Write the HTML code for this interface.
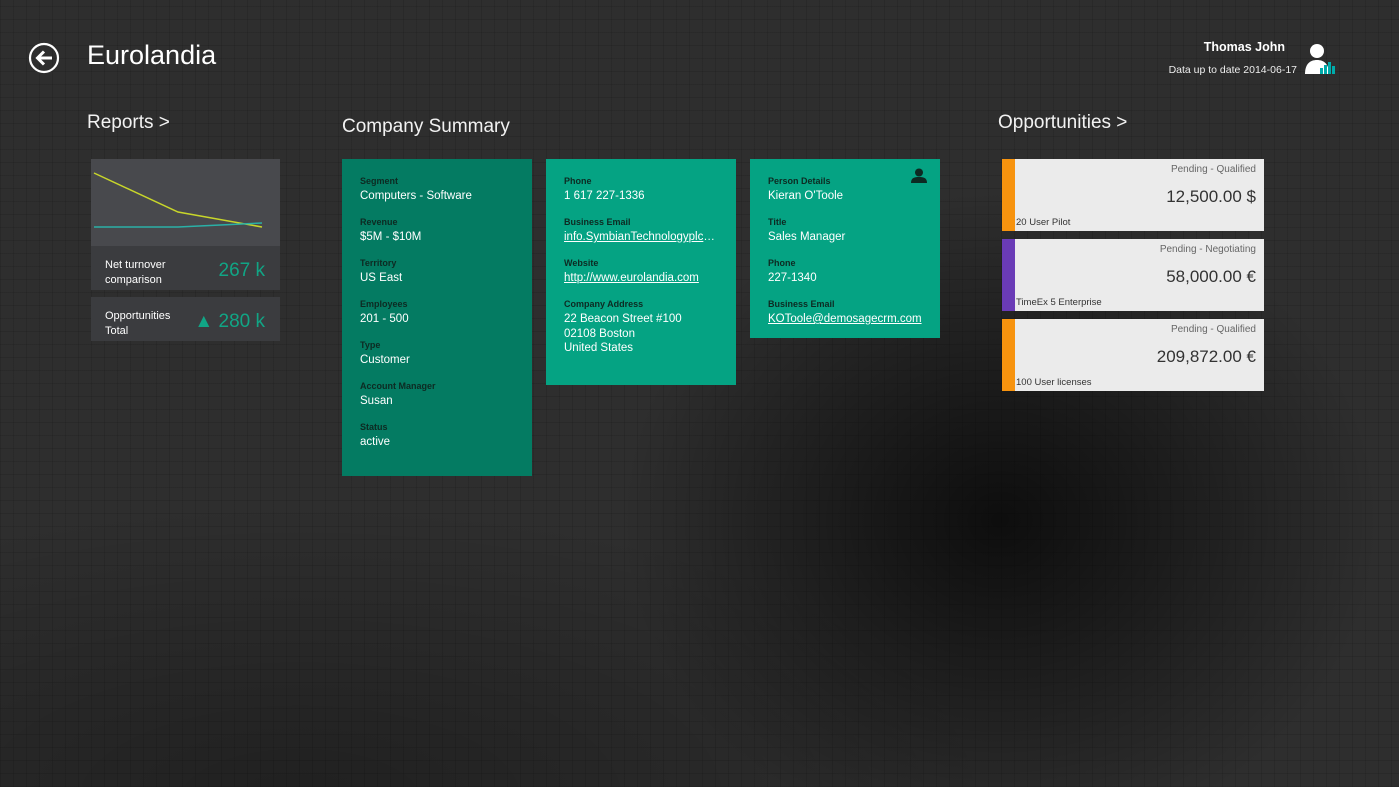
<!DOCTYPE html>
<html><head><meta charset="utf-8"><style>
*{margin:0;padding:0;box-sizing:border-box}
body{width:1399px;height:787px;overflow:hidden;font-family:"Liberation Sans",sans-serif;color:#fff;position:relative;
background:radial-gradient(ellipse 380px 330px at 1000px 520px,rgba(0,0,0,.7),rgba(0,0,0,0)),radial-gradient(ellipse 700px 300px at 300px 800px,rgba(0,0,0,.3),rgba(0,0,0,0)),
repeating-linear-gradient(0deg,rgba(0,0,0,.1) 0 1px,transparent 1px 13px),repeating-linear-gradient(90deg,rgba(0,0,0,.1) 0 1px,transparent 1px 13px),#2e2e2e}
.a{position:absolute}
.h{font-size:19px;font-weight:300;color:#f2f2f2}
.tile{position:absolute;padding:16px 18px;font-size:11.5px}
.l{font-size:9px;font-weight:bold;color:#0d2a22;line-height:12px;margin-bottom:2px}
.v{margin-bottom:12.5px;line-height:14.5px;white-space:nowrap;overflow:hidden;text-overflow:ellipsis}
u{text-decoration:underline}
.op{position:absolute;left:1002px;width:262px;height:72px;background:#ebebeb;color:#333}
.op .bar{position:absolute;left:0;top:0;bottom:0;width:13px}
.op .s{position:absolute;right:8px;top:5px;font-size:10px;color:#666}
.op .m{position:absolute;right:8px;top:28px;font-size:17px;color:#333}
.op .n{position:absolute;left:14px;bottom:3px;font-size:9.5px;color:#333}
</style></head><body>
<svg class="a" style="left:28px;top:42px" width="32" height="32" viewBox="0 0 32 32"><circle cx="16" cy="16" r="14" fill="none" stroke="#fff" stroke-width="2.2"/><path d="M24 16H10M16 9.5L9.5 16L16 22.5" fill="none" stroke="#fff" stroke-width="3"/></svg>
<div class="a" style="left:87px;top:40px;font-size:27px;font-weight:300">Eurolandia</div>
<div class="a" style="right:114px;top:40px;font-size:12.5px;font-weight:bold">Thomas John</div>
<div class="a" style="right:102px;top:64px;font-size:10.5px;color:#eee">Data up to date 2014-06-17</div>
<svg class="a" style="left:1303px;top:42px" width="32" height="34" viewBox="0 0 32 34"><circle cx="14" cy="9" r="7" fill="#fff"/><path d="M2 32C2 22 7 18 14 18C21 18 26 22 26 32Z" fill="#fff"/><rect x="17" y="26" width="3" height="6" fill="#0aa"/><rect x="21" y="23" width="3" height="9" fill="#0aa"/><rect x="25" y="20" width="3" height="12" fill="#0aa"/><rect x="29" y="24" width="3" height="8" fill="#0aa"/></svg>

<div class="a h" style="left:87px;top:112px">Reports &gt;</div>
<div class="a" style="left:91px;top:159px;width:189px;height:87px;background:#48494d"><svg width="189" height="87"><polyline points="3,14 87,53 171,68" fill="none" stroke="#c8d62a" stroke-width="1.5"/><polyline points="3,68 87,68 171,64" fill="none" stroke="#2ab0a6" stroke-width="1.5"/></svg></div>
<div class="a" style="left:91px;top:246px;width:189px;height:44px;background:#3b3c3f"></div>
<div class="a" style="left:105px;top:258px;font-size:11px;line-height:15px">Net turnover<br>comparison</div>
<div class="a" style="right:1134px;top:260px;font-size:19px;color:#11a585;font-weight:300">267 k</div>
<div class="a" style="left:91px;top:297px;width:189px;height:44px;background:#3b3c3f"></div>
<div class="a" style="left:105px;top:309px;font-size:11px;line-height:15px">Opportunities<br>Total</div>
<div class="a" style="right:1134px;top:311px;font-size:19px;color:#11a585;font-weight:300">▲ 280 k</div>

<div class="a h" style="left:342px;top:116px">Company Summary</div>
<div class="tile" style="left:342px;top:159px;width:190px;height:317px;background:#047b62">
<div class="l">Segment</div><div class="v">Computers - Software</div>
<div class="l">Revenue</div><div class="v">$5M - $10M</div>
<div class="l">Territory</div><div class="v">US East</div>
<div class="l">Employees</div><div class="v">201 - 500</div>
<div class="l">Type</div><div class="v">Customer</div>
<div class="l">Account Manager</div><div class="v">Susan</div>
<div class="l">Status</div><div class="v">active</div></div>
<div class="tile" style="left:546px;top:159px;width:190px;height:226px;background:#05a383">
<div class="l">Phone</div><div class="v">1 617 227-1336</div>
<div class="l">Business Email</div><div class="v"><u>info.SymbianTechnologyplc@demosagecrm.com</u></div>
<div class="l">Website</div><div class="v"><u>http://www.eurolandia.com</u></div>
<div class="l">Company Address</div><div class="v">22 Beacon Street #100<br>02108 Boston<br>United States</div></div>
<div class="tile" style="left:750px;top:159px;width:190px;height:179px;background:#05a383">
<svg class="a" style="left:161px;top:9px" width="16" height="15" viewBox="0 0 16 15"><circle cx="8" cy="4.5" r="4" fill="#0d2a22"/><path d="M0 15C0 10 3 9 8 9C13 9 16 10 16 15Z" fill="#0d2a22"/></svg>
<div class="l">Person Details</div><div class="v">Kieran O'Toole</div>
<div class="l">Title</div><div class="v">Sales Manager</div>
<div class="l">Phone</div><div class="v">227-1340</div>
<div class="l">Business Email</div><div class="v" style="overflow:visible"><u>KOToole@demosagecrm.com</u></div></div>

<div class="a h" style="left:998px;top:112px">Opportunities &gt;</div>
<div class="op" style="top:159px"><div class="bar" style="background:#f7930e"></div><div class="s">Pending - Qualified</div><div class="m">12,500.00 $</div><div class="n">20 User Pilot</div></div>
<div class="op" style="top:239px"><div class="bar" style="background:#6a3bb6"></div><div class="s">Pending - Negotiating</div><div class="m">58,000.00 €</div><div class="n">TimeEx 5 Enterprise</div></div>
<div class="op" style="top:319px"><div class="bar" style="background:#f7930e"></div><div class="s">Pending - Qualified</div><div class="m">209,872.00 €</div><div class="n">100 User licenses</div></div>
</body></html>
